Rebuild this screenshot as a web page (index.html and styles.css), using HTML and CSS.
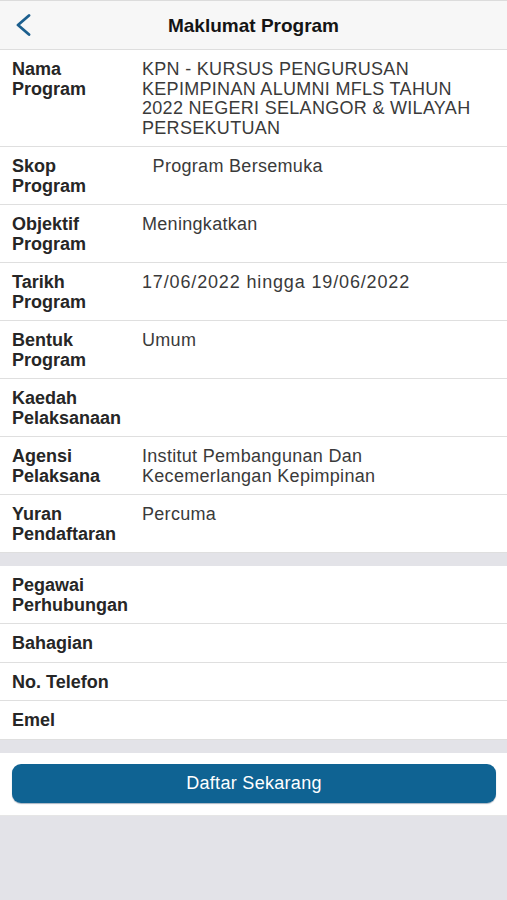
FILE: index.html
```html
<!DOCTYPE html>
<html lang="ms">
<head>
<meta charset="utf-8">
<title>Maklumat Program</title>
<link rel="stylesheet" href="styles.css">
</head>
<body>
<div class="app">
  <header class="topbar">
    <button class="back" aria-label="Kembali">
      <svg width="16" height="22" viewBox="0 0 16 22"><path d="M14 1.5 L3 11 L14 20.5" fill="none" stroke="#1c5f8e" stroke-width="2.8" stroke-linecap="round" stroke-linejoin="round"/></svg>
    </button>
    <h1 class="title">Maklumat Program</h1>
    <span class="spacer"></span>
  </header>

  <section class="group">
    <div class="row"><div class="label">Nama Program</div><div class="value">KPN - KURSUS PENGURUSAN KEPIMPINAN ALUMNI MFLS TAHUN 2022 NEGERI SELANGOR &amp; WILAYAH PERSEKUTUAN</div></div>
    <div class="row"><div class="label">Skop Program</div><div class="value">&nbsp;&nbsp;Program Bersemuka</div></div>
    <div class="row"><div class="label">Objektif Program</div><div class="value">Meningkatkan</div></div>
    <div class="row"><div class="label">Tarikh Program</div><div class="value date">17/06/2022 hingga 19/06/2022</div></div>
    <div class="row"><div class="label">Bentuk Program</div><div class="value">Umum</div></div>
    <div class="row"><div class="label">Kaedah Pelaksanaan</div><div class="value"></div></div>
    <div class="row"><div class="label">Agensi Pelaksana</div><div class="value">Institut Pembangunan Dan Kecemerlangan Kepimpinan</div></div>
    <div class="row"><div class="label">Yuran Pendaftaran</div><div class="value">Percuma</div></div>
  </section>

  <section class="group">
    <div class="row"><div class="label">Pegawai Perhubungan</div><div class="value"></div></div>
    <div class="row"><div class="label">Bahagian</div><div class="value"></div></div>
    <div class="row"><div class="label">No. Telefon</div><div class="value"></div></div>
    <div class="row"><div class="label">Emel</div><div class="value"></div></div>
  </section>

  <div class="actions">
    <button class="primary">Daftar Sekarang</button>
  </div>
</div>
</body>
</html>
```

FILE: styles.css
```css
* { box-sizing: border-box; }

html, body {
  margin: 0;
  padding: 0;
  background: #e3e3e8;
  font-family: "Liberation Sans", Arial, sans-serif;
}

.app {
  width: 507px;
}

.topbar {
  display: grid;
  grid-template-columns: 60px 1fr 60px;
  align-items: center;
  height: 50px;
  background: #f7f7f7;
  border-top: 1px solid #dcdcdc;
  border-bottom: 1px solid #dedede;
}

.back {
  display: flex;
  align-items: center;
  background: none;
  border: 0;
  padding: 0 0 0 15px;
  margin: 0;
  height: 100%;
}

.title {
  margin: 0;
  text-align: center;
  font-size: 19px;
  font-weight: bold;
  color: #141414;
  padding-top: 2px;
}

.group {
  background: #fff;
  margin-bottom: 13px;
}

.row {
  display: grid;
  grid-template-columns: 130px 1fr;
  padding: 10px 12px 8px;
  border-bottom: 1px solid #dfdfdf;
  font-size: 18px;
  line-height: 19.5px;
}

.label {
  font-weight: bold;
  color: #262626;
  padding-right: 8px;
}

.value {
  color: #3a3a3a;
  letter-spacing: 0.3px;
  padding-right: 18px;
}

.value.date {
  letter-spacing: 0.85px;
}

.actions {
  background: #fff;
  padding: 11px 11px 12px 12px;
  border-bottom: 1px solid #e6e6e6;
}

.primary {
  display: block;
  width: 100%;
  height: 39px;
  border: 0;
  border-radius: 9px;
  background: #0f6393;
  color: #fff;
  font-family: "Liberation Sans", Arial, sans-serif;
  font-size: 18px;
  letter-spacing: 0.3px;
  box-shadow: 0 1px 1px rgba(0, 40, 80, 0.35);
}
```
